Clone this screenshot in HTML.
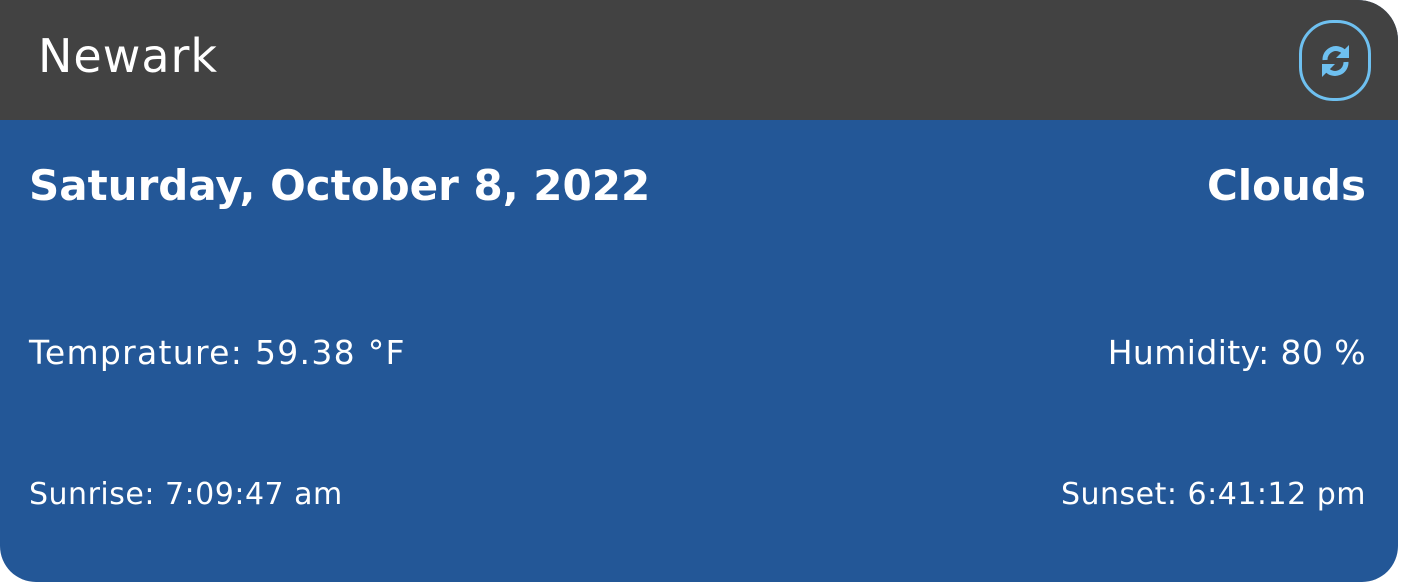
<!DOCTYPE html>
<html><head><style>
html,body{margin:0;padding:0;width:1402px;height:582px;background:#fff;overflow:hidden;font-family:"DejaVu Sans","Liberation Sans",sans-serif;}
.card{position:absolute;left:0;top:0;width:1398px;height:582px;border-radius:0 40px 36px 36px;overflow:hidden;background:#235797;}
.hdr{position:absolute;left:0;top:0;width:100%;height:120px;background:#424242;}
.t{position:absolute;color:#fff;white-space:nowrap;line-height:1;}
.btn{position:absolute;left:1299px;top:20px;width:66px;height:75px;border:3px solid #6ec0f0;border-radius:34px;}
</style></head><body>
<div class="card">
<div class="hdr">
<div class="t" style="left:38px;top:33px;font-size:46px;letter-spacing:1px;">Newark</div>
<div class="btn"><svg width="66" height="75" viewBox="0 0 66 75" style="position:absolute;left:0;top:0">
<g fill="none" stroke="#6ec0f0" stroke-width="5">
<path d="M23 37 A11 11 0 0 1 42 29"/>
<path d="M44 39 A11 11 0 0 1 25 47"/>
</g>
<path d="M47 22 L47 35 L34 35 Z" fill="#6ec0f0"/>
<path d="M20 54 L20 41 L33 41 Z" fill="#6ec0f0"/>
</svg></div>
</div>
<div class="t" style="left:29px;top:165px;font-size:42px;font-weight:bold;">Saturday, October 8, 2022</div>
<div class="t" style="right:32px;top:165px;font-size:42px;font-weight:bold;">Clouds</div>
<div class="t" style="left:29px;top:336px;font-size:33px;letter-spacing:1.3px;">Temprature: 59.38 °F</div>
<div class="t" style="right:32px;top:336px;font-size:33px;letter-spacing:0.4px;">Humidity: 80 %</div>
<div class="t" style="left:29px;top:480px;font-size:30px;letter-spacing:0.5px;">Sunrise: 7:09:47 am</div>
<div class="t" style="right:32px;top:480px;font-size:30px;letter-spacing:0.5px;">Sunset: 6:41:12 pm</div>
</div>
</body></html>
